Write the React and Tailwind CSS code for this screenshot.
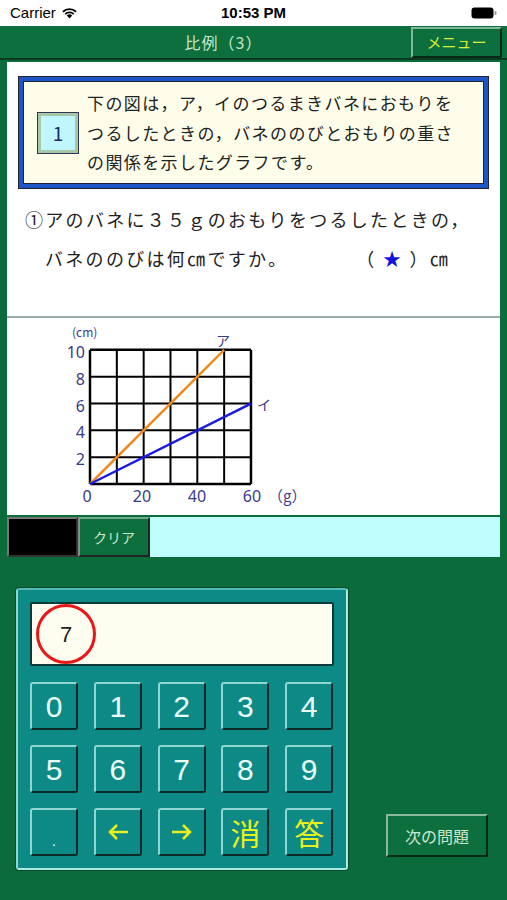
import React from "react";

const jp = { fontFamily: '"Noto Sans CJK JP", "Noto Sans", sans-serif' };

// bevelled key: light top-left edge, dark bottom-right edge
function Key({ children, className = "" }) {
  return (
    <div
      className={`flex h-[48px] w-[48px] items-center justify-center rounded-[3px] border-2 border-t-[#8fd6d2] border-l-[#8fd6d2] border-b-[#0b2a28] border-r-[#0b2a28] bg-[#0e8a86] text-[30px] ${className}`}
    >
      {children}
    </div>
  );
}

function StatusBar() {
  return (
    <div className="flex h-[26px] items-center justify-between bg-white px-[10px] text-[15px] text-black" style={{ fontFamily: '"Liberation Sans", sans-serif' }}>
      <div className="flex w-[120px] items-center gap-[5px]">
        <span>Carrier</span>
        <svg width="17" height="12" viewBox="0 0 17 12">
          <path d="M8.5 11.5 L5.8 8.6 A4 4 0 0 1 11.2 8.6 Z" fill="#000" />
          <path d="M3.6 6.4 A7 7 0 0 1 13.4 6.4 L12.1 7.7 A5.2 5.2 0 0 0 4.9 7.7 Z" fill="#000" />
          <path d="M1.3 4.1 A10.3 10.3 0 0 1 15.7 4.1 L14.4 5.4 A8.5 8.5 0 0 0 2.6 5.4 Z" fill="#000" />
        </svg>
      </div>
      <span className="font-semibold">10:53 PM</span>
      <div className="flex w-[120px] justify-end">
        <svg width="26" height="12" viewBox="0 0 26 12">
          <rect x="0.5" y="0.5" width="22" height="11" rx="3" fill="#000" />
          <rect x="23.5" y="4" width="2" height="4" rx="1" fill="#999" />
        </svg>
      </div>
    </div>
  );
}

function Graph() {
  const x0 = 83, y0 = 166, s = 26.83;
  const lines = [];
  for (let i = 0; i <= 6; i++) lines.push(<line key={"v" + i} x1={x0 + i * s} y1={y0 - 5 * s} x2={x0 + i * s} y2={y0} stroke="#000" strokeWidth={i === 0 || i === 6 ? 2.5 : 2} />);
  for (let j = 0; j <= 5; j++) lines.push(<line key={"h" + j} x1={x0} y1={y0 - j * s} x2={x0 + 6 * s} y2={y0 - j * s} stroke="#000" strokeWidth={j === 0 || j === 5 ? 2.5 : 2} />);
  const lab = { fill: "#3a3a8c", fontSize: 16, fontFamily: '"Noto Sans", sans-serif' };
  return (
    <svg width="340" height="197" viewBox="0 0 340 197">
      {lines}
      <line x1={x0} y1={y0} x2={x0 + 5 * s} y2={y0 - 5 * s} stroke="#f08c1e" strokeWidth="2.5" />
      <line x1={x0} y1={y0} x2={x0 + 6 * s} y2={y0 - 3 * s} stroke="#1a1ae6" strokeWidth="2.5" />
      <text x="65" y="19" {...lab} fontSize="12" style={jp}>(cm)</text>
      {[10, 8, 6, 4, 2].map((v, i) => (
        <text key={v} x="78" y={y0 - (5 - i) * s + 8} textAnchor="end" {...lab}>{v}</text>
      ))}
      {[0, 20, 40, 60].map((v, i) => (
        <text key={v} x={80 + i * 55} y="184" textAnchor="middle" {...lab}>{v}</text>
      ))}
      <text x="261" y="184" {...lab} fontSize="15" style={jp}>（g）</text>
      <text x="209" y="28" {...lab} fontSize="14" style={jp}>ア</text>
      <text x="250" y="92" {...lab} fontSize="14" style={jp}>イ</text>
    </svg>
  );
}

export default function App() {
  return (
    <div className="h-[900px] w-[507px] overflow-hidden bg-[#0b6b3b]" style={jp}>
      <StatusBar />

      {/* header */}
      <div className="relative flex h-[34px] items-center justify-center border-b-[2px] border-[#0a3a22] bg-[#0d6f3d]">
        <span className="ml-[-60px] text-[16px] tracking-[1px] text-[#c8e6c8]">比例（3）</span>
        <div className="absolute right-[5px] top-[1px] flex h-[31px] w-[91px] items-center justify-center border-2 border-t-[#7fb89a] border-l-[#7fb89a] border-b-[#062a16] border-r-[#062a16] bg-[#0d6f3d] text-[15px] text-[#d8f03c]">
          メニュー
        </div>
      </div>

      {/* question panel */}
      <div className="mx-[7px] mt-[2px] h-[256px] border-b-2 border-[#9aa] bg-white pt-[15px]">
        <div className="mx-[12px] h-[111px] border-[4px] border-[#1d55c6] shadow-[0_0_0_1px_#223]">
          <div className="flex h-full items-center border border-[#223] bg-[#fdfdea] pl-[14px] text-[17px] leading-[29.5px] text-[#222]">
            <div className="mr-[9px] flex h-[40px] w-[40px] shrink-0 items-center justify-center border-[3px] border-[#a6c8a6] bg-[#c0f6ff] text-[19px] text-[#1a2a6a] shadow-[0_0_0_1px_#335]">
              1
            </div>
            <div className="tracking-[1.4px]">
              下の図は，ア，イのつるまきバネにおもりを<br />
              つるしたときの，バネののびとおもりの重さ<br />
              の関係を示したグラフです。
            </div>
          </div>
        </div>
        <div className="mt-[12px] pl-[18px] text-[18px] leading-[39px] tracking-[2.3px] text-[#222]">
          <div>①アのバネに３５ｇのおもりをつるしたときの，</div>
          <div className="flex pl-[20px]">
            <span>バネののびは何㎝ですか。</span>
            <span className="ml-[68px]">（ <span className="text-[#1010e0]">★</span> ）㎝</span>
          </div>
        </div>
      </div>

      {/* graph panel */}
      <div className="mx-[7px] h-[197px] bg-white">
        <Graph />
      </div>

      {/* clear row */}
      <div className="mx-[7px] mt-[2px] flex h-[40px]">
        <div className="h-full w-[71px] border-2 border-t-[#777] border-l-[#777] border-b-[#333] border-r-[#333] bg-black" />
        <div className="flex h-full w-[72px] items-center justify-center border-2 border-t-[#6fa88a] border-l-[#8a8a8a] border-b-[#222] border-r-[#222] bg-[#0d6f3d] text-[14px] text-[#cfe8cf]">
          クリア
        </div>
        <div className="h-full flex-1 bg-[#c0fefe]" />
      </div>

      {/* keypad area */}
      <div className="mt-[31px] flex items-end">
        <div className="ml-[16px] h-[282px] w-[332px] rounded-[3px] border-2 border-t-[#4fbab6] border-l-[#8fd6d2] border-b-[#b0e8e4] border-r-[#b0e8e4] bg-[#0e8a86] px-[12px] pt-[12px] shadow-[0_0_0_1px_#064a2a]">
          <div className="flex h-[64px] items-center rounded-[2px] border-2 border-[#0b3a38] bg-[#fdfdf0] pl-[4px]">
            <div className="flex h-[60px] w-[60px] items-center justify-center rounded-full border-[3px] border-[#e81818] text-[22px] text-[#222]" style={{ fontFamily: '"Liberation Sans", sans-serif' }}>
              7
            </div>
          </div>
          <div className="mt-[16px] grid grid-cols-5 gap-x-[15px] gap-y-[15px]" style={{ fontFamily: '"Liberation Sans", sans-serif' }}>
            {["0", "1", "2", "3", "4", "5", "6", "7", "8", "9"].map((n) => (
              <Key key={n} className="text-[#eafff8]">{n}</Key>
            ))}
            <Key className="items-end pb-[6px] text-[#f0fff8]">
              <span className="text-[14px] leading-none">.</span>
            </Key>
            <Key className="text-[#e8f020]">
              <svg width="22" height="18" viewBox="0 0 22 18"><path d="M21 9 H3 M10 2 L3 9 L10 16" fill="none" stroke="#e8f020" strokeWidth="2.5" /></svg>
            </Key>
            <Key className="text-[#e8f020]">
              <svg width="22" height="18" viewBox="0 0 22 18"><path d="M1 9 H19 M12 2 L19 9 L12 16" fill="none" stroke="#e8f020" strokeWidth="2.5" /></svg>
            </Key>
            <Key className="text-[24px] text-[#e8f020]"><span style={jp}>消</span></Key>
            <Key className="text-[24px] text-[#e8f020]"><span style={jp}>答</span></Key>
          </div>
        </div>
        <div className="mb-[13px] ml-[38px] flex h-[43px] w-[102px] items-center justify-center border-2 border-t-[#8ab89a] border-l-[#8ab89a] border-b-[#062a16] border-r-[#062a16] bg-[#0d6f3d] text-[16px] text-[#cfe8cf]">
          次の問題
        </div>
      </div>
    </div>
  );
}
